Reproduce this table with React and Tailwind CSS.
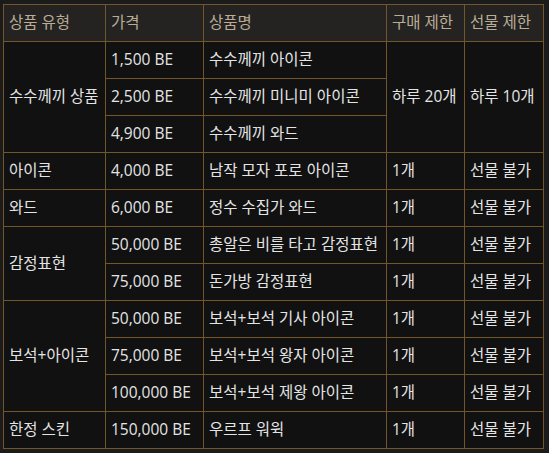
const rows = [
  { type: "수수께끼 상품", span: 3, price: "1,500 BE", name: "수수께끼 아이콘", buy: "하루 20개", gift: "하루 10개", limitSpan: 3 },
  { price: "2,500 BE", name: "수수께끼 미니미 아이콘" },
  { price: "4,900 BE", name: "수수께끼 와드" },
  { type: "아이콘", span: 1, price: "4,000 BE", name: "남작 모자 포로 아이콘", buy: "1개", gift: "선물 불가", limitSpan: 1 },
  { type: "와드", span: 1, price: "6,000 BE", name: "정수 수집가 와드", buy: "1개", gift: "선물 불가", limitSpan: 1 },
  { type: "감정표현", span: 2, price: "50,000 BE", name: "총알은 비를 타고 감정표현", buy: "1개", gift: "선물 불가", limitSpan: 1 },
  { price: "75,000 BE", name: "돈가방 감정표현", buy: "1개", gift: "선물 불가", limitSpan: 1 },
  { type: "보석+아이콘", span: 3, price: "50,000 BE", name: "보석+보석 기사 아이콘", buy: "1개", gift: "선물 불가", limitSpan: 1 },
  { price: "75,000 BE", name: "보석+보석 왕자 아이콘", buy: "1개", gift: "선물 불가", limitSpan: 1 },
  { price: "100,000 BE", name: "보석+보석 제왕 아이콘", buy: "1개", gift: "선물 불가", limitSpan: 1 },
  { type: "한정 스킨", span: 1, price: "150,000 BE", name: "우르프 워윅", buy: "1개", gift: "선물 불가", limitSpan: 1 },
];

const cell = "border border-[#725629] px-[5px] h-[37px] align-middle text-left whitespace-nowrap";

export default function App() {
  return (
    <div
      className="min-h-screen bg-[#1b1b1b] pt-[4px] pl-[3px]"
      style={{ fontFamily: '"Open Sans", "Noto Sans CJK KR", sans-serif' }}
    >
      <table className="table-fixed border-collapse w-[540px] text-[15.5px] leading-none">
        <colgroup>
          <col className="w-[102px]" />
          <col className="w-[98px]" />
          <col className="w-[183px]" />
          <col className="w-[78px]" />
          <col className="w-[79px]" />
        </colgroup>
        <thead>
          <tr className="bg-[#252321] text-[#b9ad98]">
            <th className={`${cell} font-normal`}>상품 유형</th>
            <th className={`${cell} font-normal`}>가격</th>
            <th className={`${cell} font-normal`}>상품명</th>
            <th className={`${cell} font-normal`}>구매 제한</th>
            <th className={`${cell} font-normal`}>선물 제한</th>
          </tr>
        </thead>
        <tbody className="bg-[#111111] text-[#e4e4e4]">
          {rows.map((r, i) => (
            <tr key={i}>
              {r.type && (
                <td rowSpan={r.span} className={cell}>
                  {r.type}
                </td>
              )}
              <td className={cell}>{r.price}</td>
              <td className={cell}>{r.name}</td>
              {r.buy && (
                <td rowSpan={r.limitSpan} className={cell}>
                  {r.buy}
                </td>
              )}
              {r.gift && (
                <td rowSpan={r.limitSpan} className={cell}>
                  {r.gift}
                </td>
              )}
            </tr>
          ))}
        </tbody>
      </table>
    </div>
  );
}
